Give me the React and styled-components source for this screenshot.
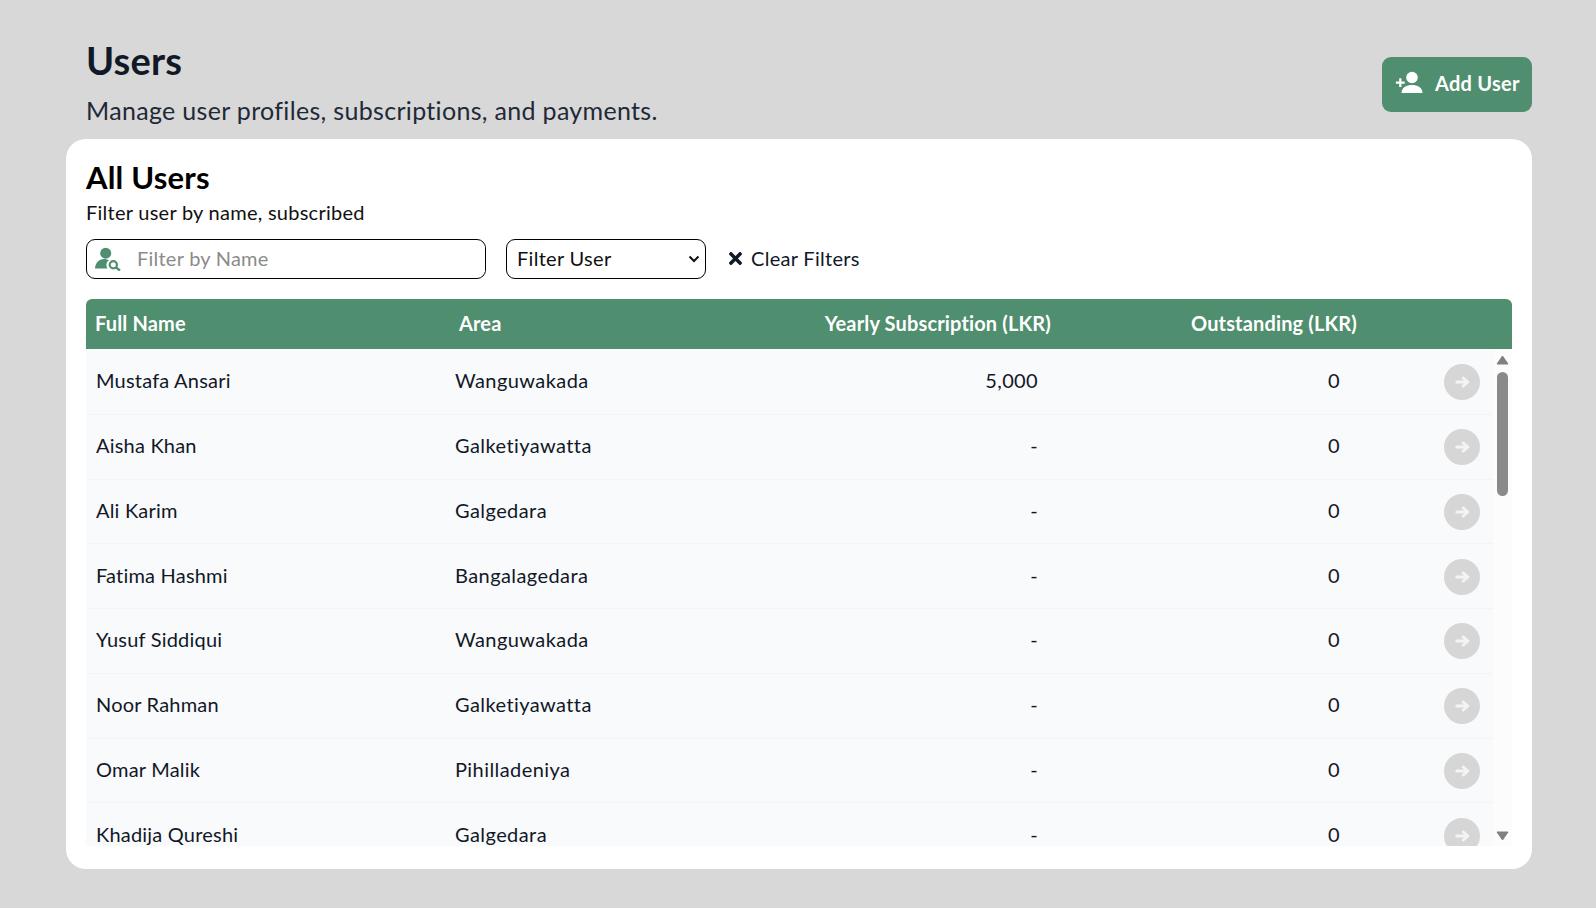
import styled, { createGlobalStyle } from 'styled-components';
import { FaTimes } from 'react-icons/fa';

const users = [
  { name: 'Mustafa Ansari', area: 'Wanguwakada', yearly: '5,000', outstanding: '0' },
  { name: 'Aisha Khan', area: 'Galketiyawatta', yearly: '-', outstanding: '0' },
  { name: 'Ali Karim', area: 'Galgedara', yearly: '-', outstanding: '0' },
  { name: 'Fatima Hashmi', area: 'Bangalagedara', yearly: '-', outstanding: '0' },
  { name: 'Yusuf Siddiqui', area: 'Wanguwakada', yearly: '-', outstanding: '0' },
  { name: 'Noor Rahman', area: 'Galketiyawatta', yearly: '-', outstanding: '0' },
  { name: 'Omar Malik', area: 'Pihilladeniya', yearly: '-', outstanding: '0' },
  { name: 'Khadija Qureshi', area: 'Galgedara', yearly: '-', outstanding: '0' },
];

const chevron = "url(\"data:image/svg+xml,%3Csvg xmlns='http://www.w3.org/2000/svg' width='12' height='8'%3E%3Cpath d='M1.500 1.500 6 6l4.500-4.500' fill='none' stroke='%23111' stroke-width='2'/%3E%3C/svg%3E\")";

const AddUserIcon = () => (
  <svg width="30" height="24" viewBox="0 0 30 24" fill="currentColor">
    <circle cx="18" cy="6.500" r="5.800" />
    <path d="M7.500 22c0-5.500 5-8 10.500-8s10.500 2.500 10.500 8z" />
    <path d="M5.200 7.200h2.200v3.300h3.300v2.200H7.400V16H5.200v-3.300H1.900v-2.200h3.300z" />
  </svg>
);

const UserSearchIcon = () => (
  <svg width="26" height="24" viewBox="0 0 26 24">
    <circle cx="10.700" cy="6.200" r="5.500" fill="#4f8e6e" />
    <path d="M0 21.500c.3-5.500 4-9.500 9-9.500 2 0 3.500.5 5 1.500-2.500 1.200-3.500 5-1.500 8z" fill="#4f8e6e" />
    <circle cx="18.300" cy="17.800" r="3.600" fill="none" stroke="#4f8e6e" strokeWidth="2.200" />
    <path d="M21 20.500l4 3" stroke="#4f8e6e" strokeWidth="2.200" />
  </svg>
);

const ArrowIcon = () => (
  <svg width="15" height="12" viewBox="0 0 15 12" fill="none" stroke="currentColor" strokeWidth="3" strokeLinecap="round" strokeLinejoin="round">
    <path d="M1.800 6H12" />
    <path d="M8.300 2 12.800 6 8.300 10" />
  </svg>
);

const App = () => (
  <Page>
    <GlobalStyle />
    <TopBar>
      <div>
        <Title>Users</Title>
        <Subtitle>Manage user profiles, subscriptions, and payments.</Subtitle>
      </div>
      <AddButton type="button">
        <AddUserIcon />
        Add User
      </AddButton>
    </TopBar>

    <Card>
      <CardTitle>All Users</CardTitle>
      <CardHint>Filter user by name, subscribed</CardHint>

      <Filters>
        <SearchBox>
          <UserSearchIcon />
          <SearchInput placeholder="Filter by Name" />
        </SearchBox>
        <FilterSelect defaultValue="">
          <option value="">Filter User</option>
          <option value="subscribed">Subscribed</option>
        </FilterSelect>
        <ClearButton type="button">
          <FaTimes size={19} />
          Clear Filters
        </ClearButton>
      </Filters>

      <HeadRow>
        <HeadCell>Full Name</HeadCell>
        <HeadCell>Area</HeadCell>
        <HeadCell $right>Yearly Subscription (LKR)</HeadCell>
        <HeadCell $right>Outstanding (LKR)</HeadCell>
      </HeadRow>

      <TableBody>
        <RowList>
          {users.map((user) => (
            <Row key={user.name}>
              <NameCell>{user.name}</NameCell>
              <AreaCell>{user.area}</AreaCell>
              <Cell $right>{user.yearly}</Cell>
              <Cell $right>{user.outstanding}</Cell>
              <ActionCell>
                <OpenButton type="button" aria-label={`Open ${user.name}`}>
                  <ArrowIcon />
                </OpenButton>
              </ActionCell>
            </Row>
          ))}
        </RowList>
        <ScrollRail>
          <RailArrow viewBox="0 0 13 10">
            <path d="M6.500 1L12 9H1z" />
          </RailArrow>
          <RailThumb />
          <RailArrow viewBox="0 0 13 10">
            <path d="M6.500 9L12 1H1z" />
          </RailArrow>
        </ScrollRail>
      </TableBody>
    </Card>
  </Page>
);

export default App;

const GlobalStyle = createGlobalStyle`
  html, body { margin: 0; height: 100%; }
  body {
    background: #d8d8d8;
    font-family: 'Lato', 'Open Sans', sans-serif;
  }
`;

const Page = styled.div`
  box-sizing: border-box;
  height: 908px;
  padding: 37px 64px 39px 66px;
  overflow: hidden;
`;

const TopBar = styled.header`
  display: flex;
  justify-content: space-between;
  align-items: flex-start;
  height: 102px;
  padding-left: 20px;
`;

const Title = styled.h1`
  margin: 0;
  font-size: 38px;
  line-height: 46px;
  font-weight: 700;
  letter-spacing: 0.2px;
  color: #111827;
`;

const Subtitle = styled.p`
  margin: 10px 0 0;
  font-size: 25px;
  line-height: 34px;
  letter-spacing: 0.32px;
  color: #1f2937;
`;

const AddButton = styled.button`
  display: flex;
  align-items: center;
  gap: 11px;
  height: 55px;
  width: 150px;
  margin-top: 20px;
  padding: 0 0 3px 12px;
  border: 0;
  border-radius: 9px;
  background: #4f8e6e;
  color: #fff;
  font: 700 20px 'Lato', sans-serif;
  letter-spacing: 0.25px;
`;

const Card = styled.section`
  box-sizing: border-box;
  height: 730px;
  padding: 19px 20px 23px;
  border-radius: 20px;
  background: #fff;
  display: flex;
  flex-direction: column;
`;

const CardTitle = styled.h2`
  margin: 0;
  font-size: 31px;
  line-height: 38px;
  font-weight: 700;
  letter-spacing: 0.2px;
  color: #000;
`;

const CardHint = styled.p`
  margin: 2px 0 0;
  font-size: 20px;
  line-height: 28px;
  letter-spacing: 0.26px;
  color: #111;
`;

const Filters = styled.div`
  display: flex;
  align-items: center;
  gap: 20px;
  margin-top: 13px;
  height: 40px;
`;

const SearchBox = styled.label`
  box-sizing: border-box;
  display: flex;
  align-items: center;
  gap: 16px;
  width: 400px;
  height: 40px;
  padding-left: 8px;
  border: 1px solid #000;
  border-radius: 9px;
`;

const SearchInput = styled.input`
  flex: 1;
  min-width: 0;
  border: 0;
  outline: 0;
  padding: 0 0 2px;
  font: 20px 'Lato', sans-serif;
  letter-spacing: 0.24px;
  &::placeholder { color: #8b8b8b; }
`;

const FilterSelect = styled.select`
  box-sizing: border-box;
  appearance: none;
  width: 200px;
  height: 40px;
  padding: 0 6px 2px 10px;
  border: 1px solid #000;
  border-radius: 9px;
  background: #fff ${chevron} no-repeat right 5px center;
  color: #111;
  font: 20px 'Lato', sans-serif;
  letter-spacing: 0.3px;
`;

const ClearButton = styled.button`
  display: flex;
  align-items: center;
  gap: 6px;
  padding: 0 0 2px;
  border: 0;
  background: none;
  color: #111827;
  font: 20px 'Lato', sans-serif;
  letter-spacing: 0.3px;
`;

const HeadRow = styled.div`
  flex: none;
  display: grid;
  grid-template-columns: 364px 364px 237px 306px;
  align-items: center;
  height: 50px;
  margin-top: 20px;
  padding-bottom: 2px;
  box-sizing: border-box;
  border-radius: 6px 6px 0 0;
  background: #4f8e6e;
`;

const HeadCell = styled.div`
  padding-left: 9px;
  text-align: ${(p) => (p.$right ? 'right' : 'left')};
  color: #fff;
  font-size: 20px;
  font-weight: 700;
  letter-spacing: 0.15px;
  white-space: nowrap;
`;

const TableBody = styled.div`
  flex: 1;
  min-height: 0;
  display: flex;
  overflow: hidden;
`;

const RowList = styled.div`
  flex: 1;
  min-width: 0;
  padding-top: 1px;
  background: #f9fafb;
`;

const Row = styled.div`
  box-sizing: border-box;
  display: grid;
  grid-template-columns: 359px 370px 223px 302px 1fr;
  align-items: center;
  height: 64.75px;
  background: #f9fafb;
  border-bottom: 1px solid #f3f4f6;
`;

const Cell = styled.div`
  padding: 0 0 3px 10px;
  text-align: ${(p) => (p.$right ? 'right' : 'left')};
  color: #111827;
  font-size: 20px;
  letter-spacing: 0.35px;
`;

const NameCell = styled(Cell)`
  letter-spacing: 0.2px;
`;

const AreaCell = styled(Cell)`
  letter-spacing: 0.42px;
`;

const ActionCell = styled.div`
  display: flex;
  justify-content: flex-end;
  padding: 1px 13px 0 0;
`;

const OpenButton = styled.button`
  display: flex;
  align-items: center;
  justify-content: center;
  width: 36px;
  height: 36px;
  padding: 0;
  border: 0;
  border-radius: 50%;
  background: #d6d6d6;
  color: #f4f4f4;
`;

const ScrollRail = styled.div`
  flex: none;
  width: 19px;
  display: flex;
  flex-direction: column;
  align-items: center;
  padding: 6px 0 5px;
  box-sizing: border-box;
  background: #fcfcfc;
`;

const RailArrow = styled.svg`
  flex: none;
  width: 13px;
  height: 10px;
  fill: #808080;
  stroke: #808080;
  stroke-linejoin: round;
`;

const RailThumb = styled.div`
  flex: none;
  width: 11px;
  height: 124px;
  margin: 7px 0 auto;
  border-radius: 6px;
  background: #8a8a8a;
`;
